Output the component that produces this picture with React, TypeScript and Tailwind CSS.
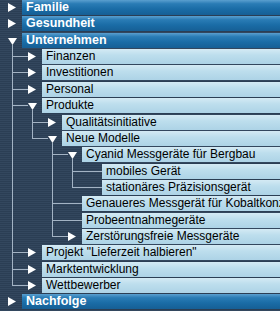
import React from 'react';

type TreeNode = {
  label: string;
  open?: boolean;
  children?: TreeNode[];
};

const tree: TreeNode[] = [
  { label: 'Familie', children: [] },
  { label: 'Gesundheit', children: [] },
  {
    label: 'Unternehmen',
    open: true,
    children: [
      { label: 'Finanzen', children: [] },
      { label: 'Investitionen', children: [] },
      { label: 'Personal', children: [] },
      {
        label: 'Produkte',
        open: true,
        children: [
          { label: 'Qualitätsinitiative', children: [] },
          {
            label: 'Neue Modelle',
            open: true,
            children: [
              {
                label: 'Cyanid Messgeräte für Bergbau',
                open: true,
                children: [{ label: 'mobiles Gerät' }, { label: 'stationäres Präzisionsgerät' }],
              },
              { label: 'Genaueres Messgerät für Kobaltkonzentration' },
              { label: 'Probeentnahmegeräte' },
              { label: 'Zerstörungsfreie Messgeräte', children: [] },
            ],
          },
        ],
      },
      { label: 'Projekt "Lieferzeit halbieren"', children: [] },
      { label: 'Marktentwicklung', children: [] },
      { label: 'Wettbewerber', children: [] },
    ],
  },
  { label: 'Nachfolge', children: [] },
];

type Row = {
  node: TreeNode;
  level: number;
  guides: boolean[];
  isLast: boolean;
};

function flatten(nodes: TreeNode[], level: number, guides: boolean[], out: Row[]) {
  nodes.forEach((node, i) => {
    const isLast = i === nodes.length - 1;
    out.push({ node, level, guides, isLast });
    if (node.open && node.children) {
      flatten(node.children, level + 1, level > 0 ? [...guides, !isLast] : guides, out);
    }
  });
  return out;
}

const LINE = '#a3b3c4';

// one 20px guide column: vertical line of an ancestor that still has rows below
function Guide({ on }: { on: boolean }) {
  return (
    <svg width="20" height="17" className="block shrink-0">
      {on && <line x1="12.5" y1="0" x2="12.5" y2="17" stroke={LINE} />}
    </svg>
  );
}

// the parent's column: line down to this row, elbow to the right
function Elbow({ last }: { last: boolean }) {
  return (
    <svg width="20" height="17" className="block shrink-0">
      <line x1="12.5" y1="0" x2="12.5" y2={last ? 8 : 17} stroke={LINE} />
      <line x1="12" y1="7.5" x2="20" y2="7.5" stroke={LINE} />
    </svg>
  );
}

// arrow / connector cell in front of the label box
function Toggle({ level, node }: { level: number; node: TreeNode }) {
  const hasChildren = !!node.children;
  return (
    <svg width="22" height="17" className="block shrink-0">
      {level > 0 && <line x1="0" y1="7.5" x2={hasChildren ? 8 : 22} y2="7.5" stroke={LINE} />}
      {hasChildren && node.open && <polygon points="8,5 17,5 12.5,12" fill="#fff" />}
      {hasChildren && !node.open && <polygon points="8,3 16,7.5 8,12" fill="#fff" />}
      {node.open && <line x1="12.5" y1="12" x2="12.5" y2="17" stroke={LINE} />}
    </svg>
  );
}

function TreeRow({ row }: { row: Row }) {
  const { node, level, guides, isLast } = row;
  const top = level === 0;

  return (
    <div className="flex h-[16.37px] overflow-hidden">
      {guides.map((g, i) => (
        <Guide key={i} on={g} />
      ))}
      {level > 0 && <Elbow last={isLast} />}
      <Toggle level={level} node={node} />
      <div
        className={
          top
            ? 'h-[15px] flex-1 overflow-hidden whitespace-nowrap pl-1 text-[12.5px] font-bold leading-[15px] text-white bg-[linear-gradient(#5a9fcf,#2a7cb5_25%,#1a6ca6_60%,#165f95)]'
            : 'h-[15px] flex-1 overflow-hidden whitespace-nowrap pl-1 text-[12px] leading-[15px] text-black bg-[linear-gradient(#d4eaf4,#bddeed_40%,#add3e6)]'
        }
      >
        {node.label}
      </div>
    </div>
  );
}

export default function App() {
  const rows = flatten(tree, 0, [], []);

  return (
    <div
      className="h-[311px] w-[280px] overflow-hidden bg-[#2e4259] bg-[repeating-linear-gradient(#33475e_0_1px,#2b3e54_1px_2px)]"
      style={{ fontFamily: '"Liberation Sans", Arial, sans-serif' }}
    >
      {rows.map((row, i) => (
        <TreeRow key={i} row={row} />
      ))}
    </div>
  );
}
